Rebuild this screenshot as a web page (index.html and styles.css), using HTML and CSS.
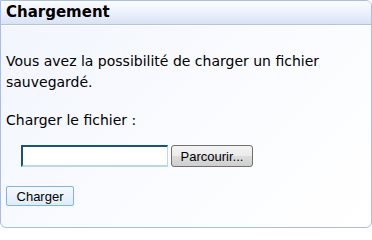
FILE: index.html
```html
<!DOCTYPE html>
<html lang="fr">
<head>
<meta charset="utf-8">
<title>Chargement</title>
<link rel="stylesheet" href="styles.css">
</head>
<body>
<div class="panel">
  <div class="panel-header">Chargement</div>
  <div class="panel-body">
    <p class="intro">Vous avez la possibilité de charger un fichier sauvegardé.</p>
    <p class="label">Charger le fichier :</p>
    <div class="file-row">
      <input class="file-input" type="text">
      <button class="btn-browse" type="button">Parcourir...</button>
    </div>
    <button class="btn-submit" type="button">Charger</button>
  </div>
</div>
</body>
</html>
```

FILE: styles.css
```css
html, body {
  margin: 0;
  padding: 0;
  background: #ffffff;
}
body {
  width: 372px;
  height: 228px;
  overflow: hidden;
}
.panel {
  box-sizing: border-box;
  width: 372px;
  height: 228px;
  border: 1px solid #aabde3;
  border-radius: 0 6px 6px 6px;
  background: linear-gradient(135deg, #f1f5fd 0%, #fbfcff 60%, #ffffff 100%);
  overflow: hidden;
  font-family: "DejaVu Sans", Verdana, sans-serif;
  color: #000;
}
.panel-header {
  height: 23px;
  border-bottom: 1px solid #b2c3e4;
  box-shadow: 0 1px 0 #ffffff;
  background: linear-gradient(#fbfcfe 0%, #eef2fb 45%, #d9e2f4 100%);
  font-weight: bold;
  font-size: 15px;
  line-height: 23px;
  padding-left: 5px;
}
.panel-body {
  padding: 26px 5px 0 5px;
  font-size: 14px;
  line-height: 21px;
}
.intro {
  margin: 0;
}
.label {
  margin: 17px 0 0 0;
}
.file-row {
  display: flex;
  gap: 3px;
  margin: 14px 0 0 15px;
}
.file-input {
  box-sizing: border-box;
  width: 147px;
  height: 22px;
  margin: 0;
  padding: 0;
  background: #fff;
  border-style: solid;
  border-width: 2px 1px 2px 2px;
  border-color: #1d5180 #b9d7f1 #b9d7f1 #1d5180;
  outline: none;
}
.btn-browse {
  box-sizing: border-box;
  width: 82px;
  height: 22px;
  margin: 0;
  padding: 0;
  border: 1px solid #707070;
  border-radius: 3px;
  background: linear-gradient(#f3f3f3 0%, #ebebeb 50%, #dcdcdc 51%, #cfcfcf 100%);
  font-family: "Liberation Sans", Arial, sans-serif;
  font-size: 13px;
  color: #000;
}
.btn-submit {
  display: block;
  box-sizing: border-box;
  width: 68px;
  height: 20px;
  margin: 19px 0 0 0;
  padding: 0;
  border: 1px solid #80b3e6;
  border-radius: 2px;
  background: linear-gradient(#f5f9fe 0%, #eaf3fc 50%, #dfecf9 100%);
  font-family: "Liberation Sans", Arial, sans-serif;
  font-size: 13px;
  color: #000;
}
```
